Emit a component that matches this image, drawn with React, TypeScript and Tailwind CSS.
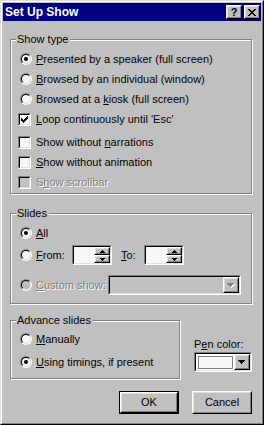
import React from "react";

const SUNK_O = "border border-t-[#808080] border-l-[#808080] border-b-white border-r-white";
const SUNK_I = "border border-t-black border-l-black border-b-[#dfdfdf] border-r-[#dfdfdf]";
const RAISE_O = "border border-t-white border-l-white border-b-black border-r-black";
const RAISE_I = "border border-t-[#dfdfdf] border-l-[#dfdfdf] border-b-[#808080] border-r-[#808080]";
const FIELD = "bg-[#f7f8f5]";
const DIS = "text-[#808080] [text-shadow:1px_1px_0_#fff]";

function Radio({ checked, disabled }: { checked?: boolean; disabled?: boolean }) {
  return (
    <div className={`ml-[2px] mr-[4px] w-[12px] h-[12px] rounded-full flex shrink-0 ${SUNK_O}`}>
      <div
        className={`flex-1 rounded-full flex items-center justify-center ${SUNK_I} ${disabled ? "bg-[#c0c0c0]" : FIELD}`}
      >
        {checked && <div className="w-[4px] h-[4px] rounded-full bg-black" />}
      </div>
    </div>
  );
}

function Check({ checked, disabled }: { checked?: boolean; disabled?: boolean }) {
  return (
    <div className={`mr-[5px] w-[13px] h-[13px] flex shrink-0 ${SUNK_O}`}>
      <div className={`flex-1 flex items-center justify-center ${SUNK_I} ${disabled ? "bg-[#c0c0c0]" : FIELD}`}>
        {checked && (
          <svg width="7" height="7" viewBox="0 0 7 7" shapeRendering="crispEdges">
            <path
              fill="#000"
              d="M6 0h1v1h-1z M5 1h2v1h-2z M0 2h1v1h-1z M4 2h3v1h-3z M0 3h2v1h-2z M3 3h3v1h-3z M0 4h5v1h-5z M1 5h3v1h-3z M2 6h1v1h-1z"
            />
          </svg>
        )}
      </div>
    </div>
  );
}

function DownArrow({ disabled }: { disabled?: boolean }) {
  const d = "M0 0h7v1h-7z M1 1h5v1h-5z M2 2h3v1h-3z M3 3h1v1h-1z";
  return (
    <svg width="8" height="5" viewBox="0 0 8 5" shapeRendering="crispEdges">
      {disabled ? (
        <>
          <path fill="#fff" transform="translate(1 1)" d={d} />
          <path fill="#808080" d={d} />
        </>
      ) : (
        <path fill="#000" d={d} />
      )}
    </svg>
  );
}

function SmallArrow({ up }: { up?: boolean }) {
  return (
    <svg width="5" height="3" viewBox="0 0 5 3" shapeRendering="crispEdges">
      <path fill="#000" d={up ? "M2 0h1v1h-1z M1 1h3v1h-3z M0 2h5v1h-5z" : "M0 0h5v1h-5z M1 1h3v1h-3z M2 2h1v1h-1z"} />
    </svg>
  );
}

function Raised({ className = "", children }: { className?: string; children?: React.ReactNode }) {
  return (
    <div className={`flex ${RAISE_O} ${className}`}>
      <div className={`flex-1 flex items-center justify-center bg-[#c0c0c0] ${RAISE_I}`}>{children}</div>
    </div>
  );
}

function Spin() {
  return (
    <div className={`w-[40px] h-[20px] flex shrink-0 ${SUNK_O}`}>
      <div className={`flex-1 flex ${SUNK_I} ${FIELD}`}>
        <div className="flex-1" />
        <div className="w-[16px] flex flex-col">
          <Raised className="h-[8px]">
            <SmallArrow up />
          </Raised>
          <Raised className="h-[8px]">
            <SmallArrow />
          </Raised>
        </div>
      </div>
    </div>
  );
}

function Group({
  label,
  className = "",
  children,
}: {
  label: string;
  className?: string;
  children: React.ReactNode;
}) {
  return (
    <fieldset
      className={`m-0 p-0 min-w-0 border border-[#808080] shadow-[inset_1px_1px_0_#fff,1px_1px_0_#fff] ${className}`}
    >
      <legend className="ml-[5px] pl-[1px] pr-[2px] leading-[13px] bg-[#c0c0c0]">{label}</legend>
      {children}
    </fieldset>
  );
}

function Row({ className = "", children }: { className?: string; children: React.ReactNode }) {
  return <div className={`h-[20px] flex items-center ${className}`}>{children}</div>;
}

function TitleBtn({ className = "", children }: { className?: string; children: React.ReactNode }) {
  return <Raised className={`w-[16px] h-[14px] ${className}`}>{children}</Raised>;
}

export default function App() {
  return (
    <div className="w-[264px] h-[425px] font-['Liberation_Sans',Arial,sans-serif] text-[11px] leading-[13px] text-black select-none">
      <div className="w-full h-full flex border border-t-[#dfdfdf] border-l-[#dfdfdf] border-b-black border-r-black">
        <div className="flex-1 flex flex-col p-[1px] bg-[#c0c0c0] border border-t-white border-l-white border-b-[#808080] border-r-[#808080]">
          {/* Title bar */}
          <div className="h-[18px] shrink-0 bg-[#000080] flex items-center pl-[2px] pr-[1px]">
            <span className="flex-1 text-white font-bold text-[12px] leading-[14px]">Set Up Show</span>
            <TitleBtn>
              <span className="font-bold text-[11px] leading-[10px] text-black">?</span>
            </TitleBtn>
            <TitleBtn className="ml-[2px]">
              <svg width="8" height="7" viewBox="0 0 8 7" shapeRendering="crispEdges">
                <path
                  fill="#000"
                  d="M0 0h2v1h-2z M6 0h2v1h-2z M1 1h2v1h-2z M5 1h2v1h-2z M2 2h4v1h-4z M3 3h2v1h-2z M2 4h4v1h-4z M1 5h2v1h-2z M5 5h2v1h-2z M0 6h2v1h-2z M6 6h2v1h-2z"
                />
              </svg>
            </TitleBtn>
          </div>

          {/* Body */}
          <div className="flex flex-col pl-[7px] pr-[9px]">
            <Group label="Show type" className="mt-[12px]">
              <div className="flex flex-col pt-[3px] pb-[1px] pl-[7px]">
                <Row>
                  <Radio checked />
                  <span>
                    <u>P</u>resented by a speaker (full screen)
                  </span>
                </Row>
                <Row>
                  <Radio />
                  <span>
                    <u>B</u>rowsed by an individual (window)
                  </span>
                </Row>
                <Row>
                  <Radio />
                  <span>
                    Browsed at a <u>k</u>iosk (full screen)
                  </span>
                </Row>
                <Row>
                  <Check checked />
                  <span>
                    <u>L</u>oop continuously until 'Esc'
                  </span>
                </Row>
                <Row className="mt-[3px]">
                  <Check />
                  <span>
                    Show without <u>n</u>arrations
                  </span>
                </Row>
                <Row>
                  <Check />
                  <span>
                    <u>S</u>how without animation
                  </span>
                </Row>
                <Row>
                  <Check disabled />
                  <span className={DIS}>
                    S<u>h</u>ow scrollbar
                  </span>
                </Row>
              </div>
            </Group>

            <Group label="Slides" className="mt-[13px]">
              <div className="flex flex-col pt-[3px] pb-[8px] pl-[7px]">
                <Row>
                  <Radio checked />
                  <span>
                    <u>A</u>ll
                  </span>
                </Row>
                <Row className="mt-[2px]">
                  <Radio />
                  <span className="w-[36px] shrink-0">
                    <u>F</u>rom:
                  </span>
                  <Spin />
                  <span className="ml-[9px] w-[23px] shrink-0">
                    <u>T</u>o:
                  </span>
                  <Spin />
                </Row>
                <Row className="mt-[10px]">
                  <Radio disabled />
                  <span className={`w-[72px] shrink-0 ${DIS}`}>
                    <u>C</u>ustom show:
                  </span>
                  <div className={`w-[133px] h-[20px] flex ${SUNK_O}`}>
                    <div className={`flex-1 flex justify-end bg-[#c0c0c0] ${SUNK_I}`}>
                      <Raised className="w-[16px]">
                        <DownArrow disabled />
                      </Raised>
                    </div>
                  </div>
                </Row>
              </div>
            </Group>

            <div className="flex items-start">
              <Group label="Advance slides" className="mt-[10px] w-[170px] shrink-0">
                <div className="flex flex-col pt-[2px] pb-[6px] pl-[7px]">
                  <Row>
                    <Radio />
                    <span>
                      <u>M</u>anually
                    </span>
                  </Row>
                  <Row className="mt-[3px]">
                    <Radio checked />
                    <span>
                      <u>U</u>sing timings, if present
                    </span>
                  </Row>
                </div>
              </Group>
              <div className="ml-[14px] mt-[34px] w-[58px] flex flex-col">
                <span>
                  P<u>e</u>n color:
                </span>
                <div className={`mt-[1px] h-[20px] flex ${SUNK_O}`}>
                  <div className={`flex-1 flex bg-white ${SUNK_I}`}>
                    <div className="flex-1 mt-[2px] mb-[1px] ml-[2px] mr-[1px] border border-[#808080] bg-[#f7f8f5]" />
                    <Raised className="w-[16px]">
                      <DownArrow />
                    </Raised>
                  </div>
                </div>
              </div>
            </div>

            <div className="mt-[12px] flex justify-end gap-[13px]">
              <div className="w-[60px] h-[23px] flex border border-black">
                <Raised className="flex-1">OK</Raised>
              </div>
              <Raised className="w-[60px] h-[23px]">Cancel</Raised>
            </div>
          </div>
        </div>
      </div>
    </div>
  );
}
